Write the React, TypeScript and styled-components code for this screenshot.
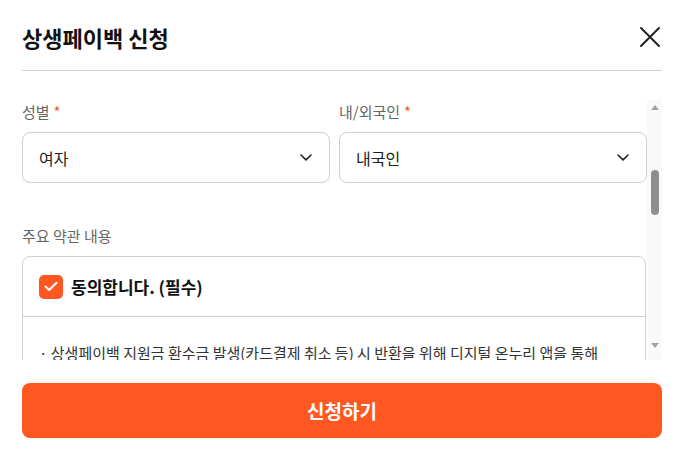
import React, { useLayoutEffect, useRef, useState } from "react";
import styled, { createGlobalStyle } from "styled-components";

const GlobalStyle = createGlobalStyle`
  html, body { margin: 0; padding: 0; background: #fff; }
  body { font-family: "Noto Sans CJK KR", "Noto Sans", sans-serif; color: #222; }
  * { box-sizing: border-box; }
`;

const ORANGE = "#ff5722";
const BORDER = "#cfd0d8";

const Modal = styled.div`
  width: 688px;
  height: 462px;
  padding: 0 26px 0 22px;
  display: flex;
  flex-direction: column;
  background: #fff;
`;

const Header = styled.header`
  height: 71px;
  padding-top: 3px;
  display: flex;
  align-items: center;
  justify-content: space-between;
  border-bottom: 1px solid ${BORDER};
`;

const Title = styled.h1`
  margin: 0;
  font-size: 22px;
  font-weight: 700;
  color: #111;
`;

const CloseButton = styled.button`
  border: 0;
  background: none;
  padding: 0;
  width: 24px;
  height: 24px;
  display: flex;
  align-items: center;
  justify-content: center;
  cursor: pointer;
`;

const ScrollWrap = styled.div`
  margin-top: 29px;
  height: 260px;
  display: flex;
`;

const Scroll = styled.div`
  flex: 1;
  height: 100%;
  overflow-y: auto;
  scrollbar-width: none;
  &::-webkit-scrollbar { display: none; }
`;

const ScrollBar = styled.div`
  width: 15px;
  height: 100%;
  background: #f9f9f9;
  display: flex;
  flex-direction: column;
  align-items: center;
`;

const ArrowBtn = styled.div<{ $down?: boolean }>`
  height: 15px;
  width: 15px;
  display: flex;
  align-items: center;
  justify-content: center;
  margin-bottom: ${(p) => (p.$down ? "7px" : "0")};
`;

const Tri = styled.span<{ $down?: boolean }>`
  width: 0;
  height: 0;
  border-left: 4.5px solid transparent;
  border-right: 4.5px solid transparent;
  ${(p) =>
    p.$down
      ? "border-top: 5px solid #a3a3a3;"
      : "border-bottom: 5px solid #a3a3a3;"}
`;

const Track = styled.div`
  flex: 1;
  width: 100%;
  position: relative;
`;

const Thumb = styled.div`
  position: absolute;
  left: 4px;
  width: 8px;
  border-radius: 4px;
  background: #8e8e8e;
`;

const Content = styled.div`
  width: 625px;
  padding-bottom: 24px;
  display: flex;
  flex-direction: column;
  gap: 43px;
`;

const Notice = styled.p`
  margin: 0;
  font-size: 15px;
  line-height: 24px;
  color: #444;
`;

const Row = styled.div`
  display: grid;
  grid-template-columns: 1fr 1fr;
  gap: 9px;
`;

const Field = styled.div`
  display: flex;
  flex-direction: column;
  gap: 10px;
`;

const Label = styled.label`
  font-size: 15px;
  line-height: 20px;
  color: #666;
  height: 20px;
`;

const Required = styled.span`
  color: ${ORANGE};
  margin-left: 4px;
`;

const Select = styled.div`
  height: 51px;
  border: 1px solid ${BORDER};
  border-radius: 8px;
  padding: 0 17px 0 16px;
  display: flex;
  align-items: center;
  justify-content: space-between;
  font-size: 16px;
  color: #222;
  background: #fff;
`;

const Placeholder = styled.span`
  color: #999;
`;

const Terms = styled.div`
  border: 1px solid ${BORDER};
  border-radius: 8px;
  margin-right: 1px;
`;

const TermsHead = styled.div`
  height: 60px;
  padding: 0 16px;
  display: flex;
  align-items: center;
  gap: 8px;
  border-bottom: 1px solid ${BORDER};
  font-size: 17px;
  font-weight: 700;
  color: #111;
`;

const Check = styled.span`
  width: 24px;
  height: 24px;
  border-radius: 5px;
  background: ${ORANGE};
  display: flex;
  align-items: center;
  justify-content: center;
`;

const TermsBody = styled.div`
  padding: 24px 16px;
  font-size: 15px;
  line-height: 24px;
  color: #333;
  word-break: keep-all;
  display: flex;
  flex-direction: column;
  gap: 8px;
`;

const Para = styled.p`
  margin: 0;
`;

const Submit = styled.button`
  margin-top: 23px;
  height: 55px;
  border: 0;
  border-radius: 8px;
  background: ${ORANGE};
  color: #fff;
  font-family: inherit;
  font-size: 19px;
  font-weight: 700;
  width: 640px;
`;

const Chevron = () => (
  <svg width="12" height="7" viewBox="0 0 12 7" fill="none">
    <path d="M1 1 L6 5.8 L11 1" stroke="#222" strokeWidth="1.6" strokeLinecap="round" strokeLinejoin="round" />
  </svg>
);

const terms = [
  "· 상생페이백 지원금 환수금 발생(카드결제 취소 등) 시 반환을 위해 디지털 온누리 앱을 통해 환수금을 납부하여야 하며, 미납 시 향후 지원 대상에서 제외될 수 있습니다.",
  "· 신청자는 본인 명의의 카드 결제 내역에 한하여 상생페이백을 신청할 수 있으며, 타인 명의로 신청한 경우 지급이 취소됩니다.",
  "· 지원금은 디지털 온누리상품권으로 지급되며, 현금으로 환급되지 않습니다.",
  "· 지급된 상품권의 유효기간은 지급일로부터 5년이며, 유효기간 경과 시 자동 소멸됩니다.",
  "· 부정한 방법으로 지원금을 수령한 경우 전액 환수되며, 관련 법령에 따라 처벌받을 수 있습니다.",
  "· 신청 정보는 지원금 지급 및 사후 관리 목적으로만 이용되며, 보유기간 경과 후 즉시 파기됩니다.",
  "· 카드사별 결제 정보 연계에 일정 시간이 소요될 수 있으며, 결제일 기준으로 실적이 집계됩니다.",
  "· 대형마트, 백화점, 온라인 쇼핑몰, 유흥업소 등 일부 업종의 결제 금액은 실적에서 제외됩니다.",
  "· 월별 지원 한도를 초과한 금액에 대해서는 지원금이 지급되지 않습니다.",
  "· 신청 후 개인정보가 변경된 경우 즉시 수정하여야 하며, 미수정으로 인한 불이익은 신청자에게 있습니다.",
  "· 예산 소진 시 사업이 조기 종료될 수 있으며, 종료 시 별도로 안내합니다.",
  "· 지원금 지급 내역은 디지털 온누리 앱의 상품권 보관함에서 확인할 수 있습니다.",
  "· 법인카드, 가족카드 등 본인 명의가 아닌 카드의 결제 금액은 실적으로 인정되지 않습니다.",
  "· 환수금 납부 기한 내 미납 시 추후 지급 예정인 지원금에서 차감될 수 있습니다.",
  "· 신청 내용에 허위 사실이 있는 경우 지원 대상에서 제외되며, 지급된 지원금은 환수됩니다.",
  "· 지원금은 매월 정해진 지급일에 일괄 지급되며, 지급 일정은 사정에 따라 변경될 수 있습니다.",
  "· 본 사업의 지원 대상 및 지원 기준은 관계 기관의 방침에 따라 사전 안내 후 변경될 수 있습니다.",
  "· 디지털 온누리 앱 회원 탈퇴 시 미사용 상품권은 소멸될 수 있으니 유의하시기 바랍니다.",
  "· 기타 자세한 사항은 상생페이백 누리집 공지사항 또는 고객센터를 통해 확인하실 수 있습니다.",
];

export default function App() {
  const scrollRef = useRef<HTMLDivElement>(null);
  const anchorRef = useRef<HTMLDivElement>(null);
  const trackRef = useRef<HTMLDivElement>(null);
  const [thumb, setThumb] = useState({ top: 52, height: 43 });

  useLayoutEffect(() => {
    const s = scrollRef.current;
    const a = anchorRef.current;
    const t = trackRef.current;
    if (s && a && t) {
      s.scrollTop = a.offsetTop - s.offsetTop - 2;
      const trackH = t.clientHeight;
      setThumb({
        top: (trackH * s.scrollTop) / s.scrollHeight,
        height: (trackH * s.clientHeight) / s.scrollHeight,
      });
    }
  }, []);

  return (
    <>
      <GlobalStyle />
      <Modal>
        <Header>
          <Title>상생페이백 신청</Title>
          <CloseButton aria-label="닫기">
            <svg width="22" height="22" viewBox="0 0 22 22" fill="none">
              <path d="M2 2 L20 20 M20 2 L2 20" stroke="#222" strokeWidth="2" strokeLinecap="round" />
            </svg>
          </CloseButton>
        </Header>
        <ScrollWrap>
          <Scroll ref={scrollRef}>
            <Content>
              <Notice>상생페이백 신청을 위해 아래 정보를 입력해 주세요.</Notice>
              <Field>
                <Label>이름<Required>*</Required></Label>
                <Select>홍길동</Select>
              </Field>
              <Row>
                <Field>
                  <Label>생년월일<Required>*</Required></Label>
                  <Select><Placeholder>YYYY.MM.DD</Placeholder></Select>
                </Field>
                <Field>
                  <Label>휴대폰 번호<Required>*</Required></Label>
                  <Select><Placeholder>010-0000-0000</Placeholder></Select>
                </Field>
              </Row>
              <Row ref={anchorRef}>
                <Field>
                  <Label>성별<Required>*</Required></Label>
                  <Select>여자<Chevron /></Select>
                </Field>
                <Field>
                  <Label>내/외국인<Required>*</Required></Label>
                  <Select>내국인<Chevron /></Select>
                </Field>
              </Row>
              <Field>
                <Label>주요 약관 내용</Label>
                <Terms>
                  <TermsHead>
                    <Check>
                      <svg width="14" height="11" viewBox="0 0 14 11" fill="none">
                        <path d="M1.5 5.5 L5.2 9 L12.5 1.8" stroke="#fff" strokeWidth="2" strokeLinecap="round" strokeLinejoin="round" />
                      </svg>
                    </Check>
                    동의합니다. (필수)
                  </TermsHead>
                  <TermsBody>
                    {terms.map((t, i) => (
                      <Para key={i}>{t}</Para>
                    ))}
                  </TermsBody>
                </Terms>
              </Field>
            </Content>
          </Scroll>
          <ScrollBar>
            <ArrowBtn><Tri /></ArrowBtn>
            <Track ref={trackRef}>
              <Thumb style={{ top: thumb.top, height: thumb.height }} />
            </Track>
            <ArrowBtn $down><Tri $down /></ArrowBtn>
          </ScrollBar>
        </ScrollWrap>
        <Submit>신청하기</Submit>
      </Modal>
    </>
  );
}
